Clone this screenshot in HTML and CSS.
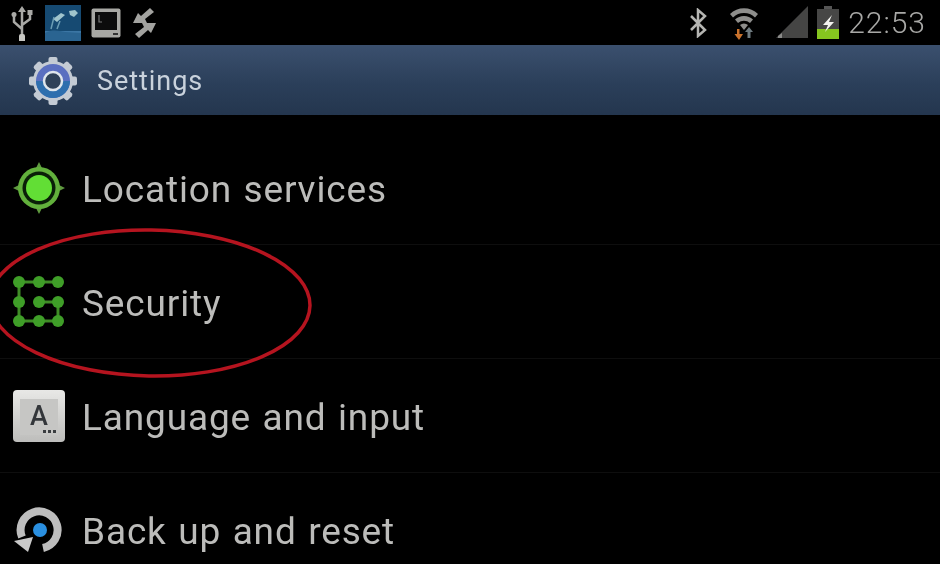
FILE: index.html
```html
<!DOCTYPE html>
<html lang="en">
<head>
    <meta charset="UTF-8">
    <meta name="viewport" content="width=device-width, initial-scale=1.0">
    <title>Settings</title>
    <link rel="stylesheet" href="styles.css">
</head>
<body>
    <div class="status-bar">
        <div class="status-left">
            <svg class="icon-usb" width="26" height="36" viewBox="0 0 26 36">
                <path d="M13 3v28M13 24L5 17v-6M13 20l8-6V9" fill="none" stroke="#a9a9a6" stroke-width="2.500"/>
                <path d="M13 1l4 6h-8z" fill="#a9a9a6"/>
                <rect x="2.500" y="7" width="5" height="5" rx="2.500" fill="#a9a9a6"/>
                <rect x="18.500" y="5" width="5" height="5" fill="#a9a9a6"/>
                <rect x="10" y="29" width="6" height="10" rx="2" fill="#c8c8c4"/>
            </svg>
            <svg class="icon-photo" width="36" height="36" viewBox="0 0 36 36">
                <rect width="36" height="36" fill="#164a72"/>
                <rect y="26" width="36" height="10" fill="#3b76a4"/>
                <path d="M0 28c8-4 14-2 20-1l16 1v8H0z" fill="#2a6491"/>
                <path d="M8 14l8-6 4 2-8 7zM24 6l6-1 3 3-4 4-4-2z" fill="#9fc4cc"/>
                <path d="M6 24l3-12M12 24l3-8" stroke="#6b9db4" stroke-width="1.500" fill="none"/>
            </svg>
            <svg class="icon-terminal" width="30" height="30" viewBox="0 0 30 30">
                <rect x="0.500" y="0.500" width="29" height="29" rx="2" fill="#a8a8a4"/>
                <rect x="4" y="4" width="22" height="18" fill="#0c0c0c"/>
                <path d="M8 7v7h3" stroke="#777" stroke-width="1.200" fill="none"/>
                <rect x="22" y="25" width="5" height="2" fill="#333"/>
            </svg>
            <svg class="icon-sync" width="26" height="32" viewBox="0 0 26 32">
                <path d="M19 1l4 4-9 7 2 4-14 0 5-10 3 3z" fill="#a3a3a0"/>
                <path d="M8 31l-4-4 9-7-2-4 14 0-5 10-3-3z" fill="#a3a3a0"/>
            </svg>
        </div>
        <div class="status-right">
            <svg class="icon-bt" width="18" height="30" viewBox="0 0 18 30">
                <path d="M2 8l14 14-7 6V2l7 6L2 22" fill="none" stroke="#b5b5b2" stroke-width="2.500"/>
            </svg>
            <svg class="icon-wifi" width="30" height="34" viewBox="0 0 30 34">
                <path d="M1 8a20 20 0 0 1 28 0l-3 3.500a16 16 0 0 0-22 0z" fill="#8e8e8c"/>
                <path d="M6 13.500a13 13 0 0 1 18 0l-3 3.500a9 9 0 0 0-12 0z" fill="#8e8e8c"/>
                <path d="M11 19a6 6 0 0 1 8 0l-4 5z" fill="#8e8e8c"/>
                <path d="M20 21l4 5h-2.500v6h-3v-6H16z" fill="#6f7b80"/>
                <path d="M10.500 23v5H14l-4 6-4.500-6H8v-5z" fill="#c9722c"/>
            </svg>
            <svg class="icon-signal" width="32" height="34" viewBox="0 0 32 34">
                <path d="M32 0v32H0z" fill="#454544"/>
                <path d="M2 32h4v-5l-4 3z" fill="#8a8a88"/>
            </svg>
            <svg class="icon-battery" width="22" height="33" viewBox="0 0 22 33">
                <rect x="7" y="0" width="8" height="4" fill="#555"/>
                <rect x="0" y="3" width="22" height="30" fill="#474746"/>
                <rect x="0" y="23" width="22" height="10" fill="#85c51f"/>
                <path d="M15 9l-9 10h5l-3 7 9-10h-5l3-7z" fill="#f4f4f0"/>
            </svg>
            <span class="clock">22:53</span>
        </div>
    </div>

    <div class="title-bar">
        <svg class="icon-gear" width="48" height="50" viewBox="0 0 48 50">
            <g fill="#c4cbd4">
                <circle cx="24" cy="25" r="20"/>
                <rect x="19.500" y="1" width="9" height="48" rx="2"/>
                <rect x="19.500" y="1" width="9" height="48" rx="2" transform="rotate(45 24 25)"/>
                <rect x="19.500" y="1" width="9" height="48" rx="2" transform="rotate(90 24 25)"/>
                <rect x="19.500" y="1" width="9" height="48" rx="2" transform="rotate(135 24 25)"/>
            </g>
            <circle cx="24" cy="25" r="17" fill="#5a6fc0"/>
            <path d="M7 25a17 17 0 0 0 34 0z" fill="#2e6fae"/>
            <circle cx="24" cy="25" r="9" fill="#2f4259" stroke="#dfe6ec" stroke-width="2.500"/>
        </svg>
        <span class="title-text">Settings</span>
    </div>

    <div class="list">
        <div class="row">
            <svg class="row-icon" width="52" height="52" viewBox="0 0 52 52">
                <path d="M26 0l3 6h-6zM26 52l-3-6h6zM0 26l6-3v6zM52 26l-6 3v-6z" fill="#5f9a3f"/>
                <circle cx="26" cy="26" r="21" fill="#62b03c"/>
                <circle cx="26" cy="26" r="16.500" fill="#0a1f08"/>
                <circle cx="26" cy="26" r="13" fill="#62de35"/>
            </svg>
            <span class="row-label">Location services</span>
        </div>
        <div class="row">
            <svg class="row-icon" width="52" height="52" viewBox="0 0 52 52">
                <path d="M6 6H45M6 6V45H45V26H26" fill="none" stroke="#3f8c26" stroke-width="3"/>
                <g fill="#3f9e28">
                    <circle cx="6" cy="6" r="6"/>
                    <circle cx="26" cy="6" r="6"/>
                    <circle cx="45" cy="6" r="6"/>
                    <circle cx="6" cy="26" r="6"/>
                    <circle cx="26" cy="26" r="6"/>
                    <circle cx="45" cy="26" r="6"/>
                    <circle cx="6" cy="45" r="6"/>
                    <circle cx="26" cy="45" r="6"/>
                    <circle cx="45" cy="45" r="6"/>
                </g>
            </svg>
            <span class="row-label">Security</span>
        </div>
        <div class="row">
            <div class="key-icon">
                <div class="key-face">
                    <span class="key-letter">A</span>
                    <div class="key-dots"></div>
                </div>
            </div>
            <span class="row-label">Language and input</span>
        </div>
        <div class="row">
            <svg class="row-icon" width="52" height="52" viewBox="0 0 52 52">
                <path d="M30 44A18.500 18.500 0 1 0 9 33" fill="none" stroke="#bdbdbd" stroke-width="8"/>
                <path d="M1 37l19-4-5 15z" fill="#c9c9c9"/>
                <circle cx="27" cy="26" r="7" fill="#2a8fe0"/>
            </svg>
            <span class="row-label">Back up and reset</span>
        </div>
    </div>

    <svg class="circle-mark" width="340" height="170" viewBox="0 0 340 170">
        <ellipse cx="150" cy="85" rx="160" ry="73" fill="none" stroke="#b5141f" stroke-width="3.500" transform="rotate(1 150 85)"/>
    </svg>
</body>
</html>
```

FILE: styles.css
```css
* {
    margin: 0;
    padding: 0;
    box-sizing: border-box;
}

html, body {
    height: 100%;
    overflow: hidden;
}

body {
    position: relative;
    background-color: #000;
    font-family: Roboto, "Liberation Sans", sans-serif;
    display: flex;
    flex-direction: column;
    filter: blur(0.5px);
}

.status-bar {
    height: 45px;
    display: flex;
    justify-content: space-between;
    align-items: center;
    padding: 0 14px 0 9px;
    flex-shrink: 0;
}

.status-left {
    display: flex;
    align-items: center;
    gap: 10px;
}

.status-right {
    display: flex;
    align-items: center;
}

.icon-wifi {
    margin-left: 22px;
}

.icon-signal {
    margin-left: 17px;
}

.icon-battery {
    margin-left: 9px;
}

.clock {
    color: #a8a8a6;
    font-size: 30px;
    font-weight: 300;
    letter-spacing: 1px;
    margin-left: 9px;
}

.title-bar {
    height: 70px;
    display: flex;
    align-items: center;
    gap: 20px;
    padding-left: 29px;
    background: linear-gradient(#3b506e, #2b3f5a 55%, #24364e);
    flex-shrink: 0;
}

.title-text {
    color: #c9d2dc;
    font-size: 27px;
    letter-spacing: 0.95px;
    padding-top: 2px;
}

.icon-gear {
    margin-top: 1px;
}

.list {
    padding-top: 16px;
    display: flex;
    flex-direction: column;
}

.row {
    height: 114px;
    flex-shrink: 0;
    display: flex;
    align-items: center;
    gap: 17px;
    padding-left: 13px;
    border-bottom: 1px solid #0e0e0e;
}

.row-icon {
    flex-shrink: 0;
}

.row-label {
    color: #bcbcba;
    font-size: 37px;
    letter-spacing: 0.85px;
    word-spacing: 1.5px;
    padding-top: 4px;
}

.key-icon {
    width: 52px;
    height: 52px;
    flex-shrink: 0;
    padding: 9px 7px 7px 7px;
    border-radius: 4px;
    background: linear-gradient(#e8e8e6, #bdbdbb);
}

.key-face {
    height: 100%;
    background-color: #c6c6c4;
    display: flex;
    flex-direction: column;
    align-items: center;
    color: #33363a;
}

.key-letter {
    font-size: 27px;
    font-weight: 500;
    line-height: 24px;
    margin-top: 5px;
}

.key-dots {
    align-self: flex-end;
    width: 13px;
    height: 3px;
    margin-top: 2px;
    margin-right: 2px;
    border-bottom: 3px dotted #3a3d40;
}

.circle-mark {
    position: absolute;
    left: 0;
    top: 218px;
}
```
